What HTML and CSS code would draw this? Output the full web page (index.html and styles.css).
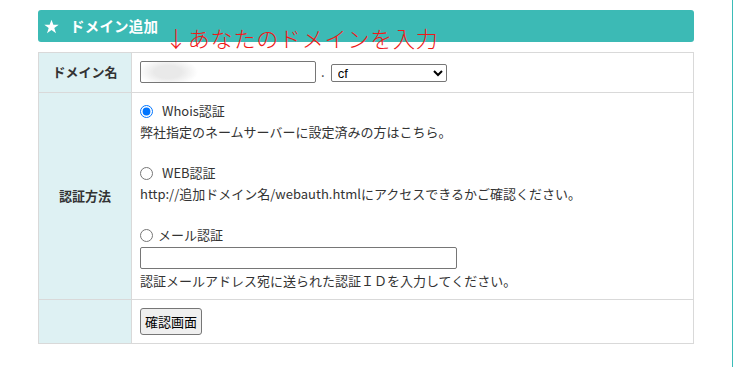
FILE: index.html
```html
<!DOCTYPE html>
<html lang="ja">
<head>
    <meta charset="UTF-8">
    <title>ドメイン追加</title>
    <link rel="stylesheet" href="styles.css">
</head>
<body>
    <div class="page">
        <div class="box">
            <h2 class="box-title">
                <svg class="star" width="15" height="15" viewBox="0 0 24 24"><polygon points="12,1 15,9 23.5,9 16.5,14.2 19.2,22.8 12,17.5 4.8,22.8 7.5,14.2 0.5,9 9,9" fill="#fff"/></svg>
                ドメイン追加
            </h2>
            <table class="form">
                <tr class="row-domain">
                    <th>ドメイン名</th>
                    <td>
                        <div class="domain-wrap">
                            <input class="domain" type="text">
                            <span class="dot">.</span>
                            <select class="tld"><option>cf</option></select>
                        </div>
                    </td>
                </tr>
                <tr class="row-auth">
                    <th>認証方法</th>
                    <td>
                        <div class="line opt"><input type="radio" name="auth" class="radio" checked>Whois認証</div>
                        <div class="line">弊社指定のネームサーバーに設定済みの方はこちら。</div>
                        <div class="line"></div>
                        <div class="line opt"><input type="radio" name="auth" class="radio">WEB認証</div>
                        <div class="line">http://追加ドメイン名/webauth.htmlにアクセスできるかご確認ください。</div>
                        <div class="line"></div>
                        <div class="line opt"><input type="radio" name="auth" class="radio tight">メール認証</div>
                        <input class="mail-id" type="text">
                        <div class="line">認証メールアドレス宛に送られた認証ＩＤを入力してください。</div>
                    </td>
                </tr>
                <tr class="row-submit">
                    <th></th>
                    <td><button class="btn">確認画面</button></td>
                </tr>
            </table>
            <p class="note">↓あなたのドメインを入力</p>
        </div>
    </div>
</body>
</html>
```

FILE: styles.css
```css
body,div,h2,p,table,th,td{
    margin:0;
    padding:0;
}
body{
    font:13px/20px "Noto Sans CJK JP","Liberation Sans",sans-serif;
    color:#333;
    background-color:#fff;
}
.page{
    width:694px;
    height:357px;
    padding:10px 0 0 38px;
    border-right:1px solid #3bbcb8;
}
.box{
    position:relative;
    width:656px;
}
.box-title{
    display:flex;
    align-items:center;
    height:32px;
    padding-left:6px;
    background-color:#3cbab5;
    border-radius:3px;
    color:#fff;
    font-size:14.5px;
    font-weight:700;
    letter-spacing:0.2px;
}
.box-title .star{
    margin-right:11px;
}
.form{
    width:656px;
    margin-top:10px;
    border-collapse:collapse;
}
.form th,
.form td{
    border:1px solid #d9d9d9;
    padding:7px 8px 8px;
    vertical-align:middle;
}
.form th{
    width:76px;
    background-color:#def1f3;
    font-weight:700;
    text-align:center;
}
.form td{
    background-color:#fff;
}
.row-domain td{
    padding:8px 8px 9px;
}
.domain-wrap{
    display:flex;
    align-items:center;
    height:22px;
}
.domain{
    width:176px;
    height:22px;
    box-sizing:border-box;
    margin:0;
    border:1px solid #767676;
    border-radius:2px;
    background:radial-gradient(ellipse 30px 14px at 27px 50%,#e9e9e9 45%,#fff 100%);
}
.dot{
    margin:0 6px 0 5px;
    line-height:22px;
}
.tld{
    width:116px;
    height:18px;
    margin-top:2px;
    padding:0 2px;
    border:1px solid #767676;
    border-radius:2px;
    background-color:#fff;
    font:13px "Liberation Sans",Arial,sans-serif;
    color:#000;
}
.line{
    height:20px;
    display:flex;
    align-items:center;
}
.line.opt{
    height:22px;
}
.radio{
    width:13px;
    height:13px;
    margin:0 9px 0 0;
    accent-color:#0075ff;
}
.radio.tight{
    margin-right:5px;
}
.mail-id{
    display:block;
    width:317px;
    height:22px;
    box-sizing:border-box;
    margin:1px 0 2px;
    border:1px solid #767676;
    border-radius:2px;
}
.row-submit td{
    padding:8px 8px 8px;
}
.btn{
    display:block;
    height:27px;
    padding:0 4px;
    border:1px solid #767676;
    border-radius:3px;
    background-color:#efefef;
    font:13px "Noto Sans CJK JP",sans-serif;
    color:#000;
}
.note{
    position:absolute;
    left:127px;
    top:14px;
    font:22px/26px "Noto Sans CJK JP",sans-serif;
    font-weight:300;
    color:#f01818;
    letter-spacing:0.8px;
}
```
